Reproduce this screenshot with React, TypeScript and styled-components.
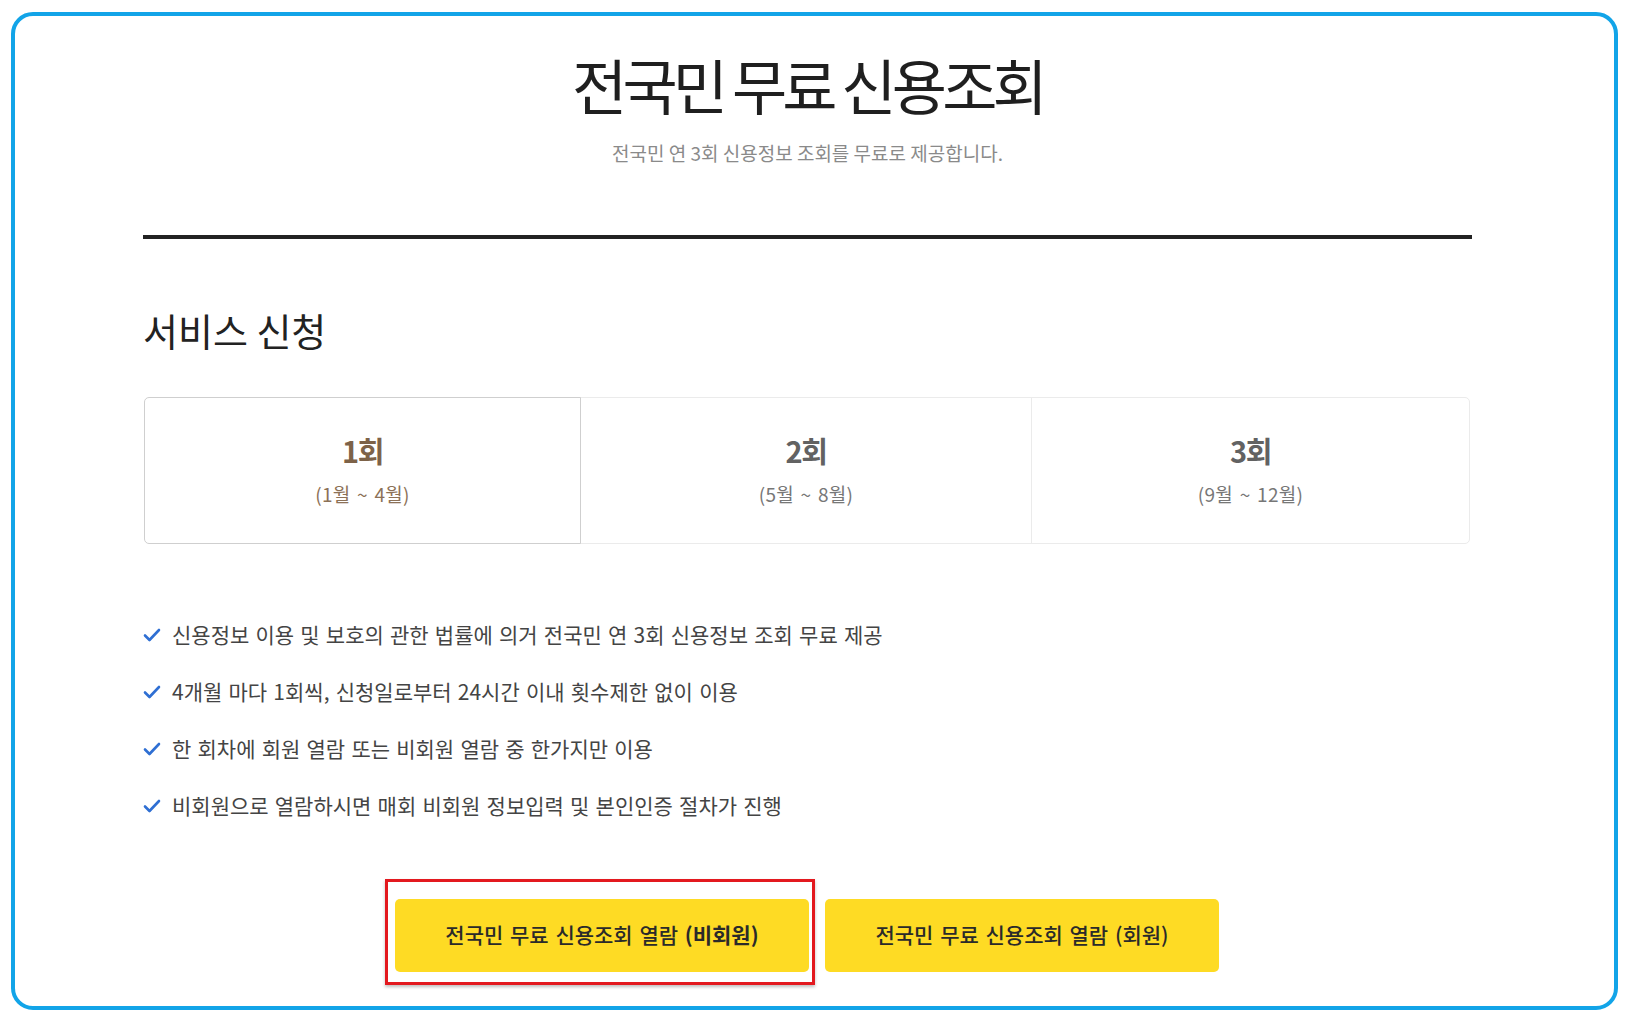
import React from "react";
import styled, { createGlobalStyle } from "styled-components";

const GlobalStyle = createGlobalStyle`
  html, body {
    margin: 0;
    padding: 0;
    background: #ffffff;
  }
  body {
    font-family: "Noto Sans CJK KR", "Noto Sans", sans-serif;
    color: #222;
  }
`;

const periods = [
  { round: "1회", months: "(1월 ~ 4월)" },
  { round: "2회", months: "(5월 ~ 8월)" },
  { round: "3회", months: "(9월 ~ 12월)" },
];

const notices = [
  "신용정보 이용 및 보호의 관한 법률에 의거 전국민 연 3회 신용정보 조회 무료 제공",
  "4개월 마다 1회씩, 신청일로부터 24시간 이내 횟수제한 없이 이용",
  "한 회차에 회원 열람 또는 비회원 열람 중 한가지만 이용",
  "비회원으로 열람하시면 매회 비회원 정보입력 및 본인인증 절차가 진행",
];

function CheckIcon() {
  return (
    <svg width="18" height="16" viewBox="0 0 18 16" fill="none">
      <path
        d="M2 8.5 L6.5 13 L16 3"
        stroke="#2f6fd3"
        strokeWidth="2.6"
        strokeLinecap="round"
        strokeLinejoin="round"
      />
    </svg>
  );
}

function App() {
  return (
    <Page>
      <GlobalStyle />
      <Frame>
        <Content>
          <Title>전국민 무료 신용조회</Title>
          <Subtitle>전국민 연 3회 신용정보 조회를 무료로 제공합니다.</Subtitle>
          <Divider />

          <SectionTitle>서비스 신청</SectionTitle>
          <Cards>
            {periods.map((p, i) => (
              <Card key={p.round} selected={i === 0}>
                <Round selected={i === 0}>{p.round}</Round>
                <Months selected={i === 0}>{p.months}</Months>
              </Card>
            ))}
          </Cards>

          <NoticeList>
            {notices.map((n) => (
              <NoticeItem key={n}>
                <CheckIcon />
                <span>{n}</span>
              </NoticeItem>
            ))}
          </NoticeList>

          <ButtonRow>
            <Highlighted>
              <ApplyButton width={414}>
                전국민 무료 신용조회 열람 <strong>(비회원)</strong>
              </ApplyButton>
              <RedMark />
            </Highlighted>
            <ApplyButton width={394}>전국민 무료 신용조회 열람 (회원)</ApplyButton>
          </ButtonRow>
        </Content>
      </Frame>
    </Page>
  );
}

const Page = styled.div`
  padding: 12px 0 0 11px;
`;

const Frame = styled.div`
  box-sizing: border-box;
  width: 1607px;
  height: 998px;
  border: 4px solid #12a4e8;
  border-radius: 22px;
  padding: 32px 0 0 128px;
`;

const Content = styled.div`
  width: 1329px;
  display: flex;
  flex-direction: column;
`;

const Title = styled.h1`
  margin: 0;
  text-align: center;
  font-size: 60px;
  line-height: 72px;
  font-weight: 400;
  letter-spacing: -4.8px;
  color: #1f1f1f;
`;

const Subtitle = styled.p`
  margin: 21px 0 0;
  text-align: center;
  font-size: 19px;
  line-height: 24px;
  letter-spacing: 0;
  color: #8a8a8a;
`;

const Divider = styled.div`
  margin-top: 70px;
  height: 4px;
  background: #222;
`;

const SectionTitle = styled.h2`
  margin: 69px 0 0;
  font-size: 38px;
  line-height: 44px;
  font-weight: 400;
  letter-spacing: 0;
  color: #222;
`;

const Cards = styled.div`
  margin: 45px 2px 0 1px;
  display: grid;
  grid-template-columns: 437fr 451fr 438fr;
  height: 147px;
`;

const Card = styled.div<{ selected: boolean }>`
  position: relative;
  z-index: ${(p) => (p.selected ? 1 : 0)};
  display: flex;
  flex-direction: column;
  align-items: center;
  justify-content: center;
  gap: 15px;
  border: 1px solid ${(p) => (p.selected ? "#cfcfcf" : "#ebebeb")};
  margin-left: -1px;
  padding-bottom: 2px;

  &:first-child {
    margin-left: 0;
    border-radius: 5px 0 0 5px;
  }
  &:last-child {
    border-radius: 0 5px 5px 0;
  }
`;

const Round = styled.div<{ selected: boolean }>`
  font-size: 29px;
  line-height: 34px;
  font-weight: 700;
  letter-spacing: -1.5px;
  color: ${(p) => (p.selected ? "#7d6248" : "#626262")};
`;

const Months = styled.div<{ selected: boolean }>`
  font-size: 19px;
  line-height: 24px;
  letter-spacing: 0.3px;
  word-spacing: 2px;
  color: ${(p) => (p.selected ? "#8c7157" : "#777777")};
`;

const NoticeList = styled.ul`
  list-style: none;
  margin: 75px 0 0;
  padding: 0;
  display: flex;
  flex-direction: column;
  gap: 27px;
`;

const NoticeItem = styled.li`
  display: flex;
  align-items: center;
  gap: 11px;
  height: 30px;
  font-size: 21px;
  line-height: 30px;
  letter-spacing: 0;
  word-spacing: 1.5px;
  color: #444;

  svg {
    flex: none;
    margin-top: 2px;
  }
`;

const ButtonRow = styled.div`
  margin-top: 79px;
  padding-left: 252px;
  display: flex;
  gap: 16px;
`;

const Highlighted = styled.div`
  position: relative;
`;

const RedMark = styled.div`
  position: absolute;
  top: -20px;
  left: -10px;
  right: -6px;
  bottom: -13px;
  border: 3px solid #e3191f;
  box-shadow: 0 2px 3px rgba(0, 0, 0, 0.25);
  pointer-events: none;
`;

const ApplyButton = styled.button<{ width: number }>`
  width: ${(p) => p.width}px;
  height: 73px;
  padding: 0 0 4px;
  border: none;
  border-radius: 5px;
  background: #fedb24;
  font-family: "Noto Sans CJK KR", "Noto Sans", sans-serif;
  font-size: 21px;
  font-weight: 500;
  letter-spacing: 0;
  word-spacing: 2px;
  color: #2a2a2a;
  cursor: pointer;

  strong {
    font-weight: 700;
  }
`;

export default App;
